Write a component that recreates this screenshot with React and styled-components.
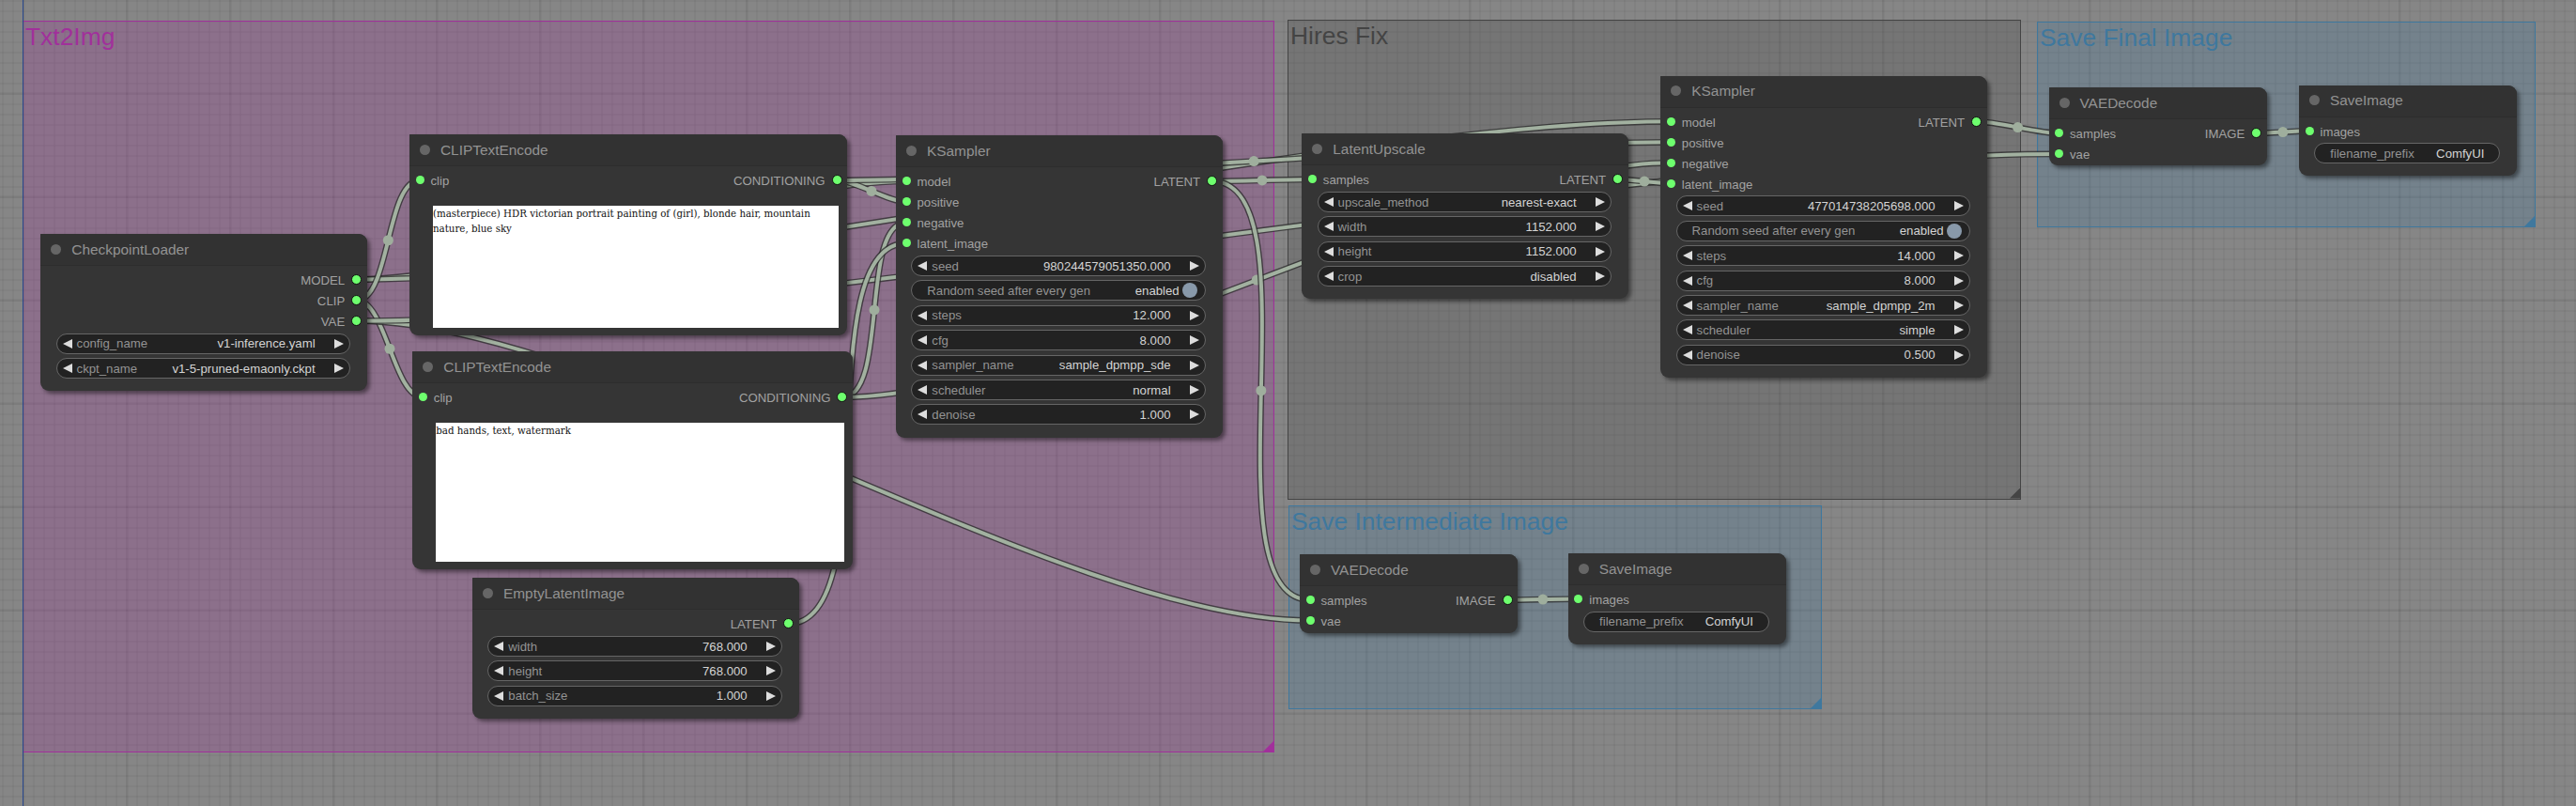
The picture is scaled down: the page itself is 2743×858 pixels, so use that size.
import styled, { createGlobalStyle } from "styled-components";

const GlobalStyle = createGlobalStyle`
  html, body {
    margin: 0;
    padding: 0;
    background: #868686;
    overflow: hidden;
  }
`;

const Canvas = styled.div`
  position: relative;
  width: 2743px;
  height: 858px;
  overflow: hidden;
  font-family: "Liberation Sans", Arial, sans-serif;
  background-color: #868686;
  background-image:
    linear-gradient(to right, rgba(0, 0, 0, 0.04) 3px, transparent 3px),
    linear-gradient(to bottom, rgba(0, 0, 0, 0.04) 3px, transparent 3px),
    linear-gradient(to right, rgba(0, 0, 0, 0.04) 2px, transparent 2px),
    linear-gradient(to bottom, rgba(0, 0, 0, 0.04) 2px, transparent 2px);
  background-size: 110px 110px, 110px 110px, 11px 11px, 11px 11px;
  background-position: 24px 0, 0 98px, 2px 0, 0 0;
`;

const AxisLine = styled.div`
  position: absolute;
  left: 24px;
  top: 0;
  width: 1px;
  height: 100%;
  background: #27478c;
`;

const Group = styled.section`
  position: absolute;
  box-sizing: border-box;
  left: ${(p) => p.$x}px;
  top: ${(p) => p.$y}px;
  width: ${(p) => p.$w}px;
  height: ${(p) => p.$h}px;
  padding: 3px 0 0 2px;
  border: 1px solid ${(p) => p.$color};
  background: ${(p) => p.$color}40;
  color: ${(p) => p.$color};
  font-size: 26.4px;
  line-height: 26px;

  &::after {
    content: "";
    position: absolute;
    right: 0;
    bottom: 0;
    width: 11px;
    height: 11px;
    background: ${(p) => p.$color};
    clip-path: polygon(100% 0, 100% 100%, 0 100%);
  }
`;

const WireLayer = styled.svg`
  position: absolute;
  left: 0;
  top: 0;
  width: 2743px;
  height: 858px;
`;

const NodeBox = styled.article`
  position: absolute;
  box-sizing: border-box;
  display: flex;
  flex-direction: column;
  left: ${(p) => p.$x}px;
  top: ${(p) => p.$y}px;
  width: ${(p) => p.$w}px;
  height: ${(p) => p.$h}px;
  background: #353535;
  border-radius: 1px 9px 9px 9px;
  box-shadow: 3px 3px 4px rgba(0, 0, 0, 0.45);
`;

const TitleBar = styled.header`
  box-sizing: border-box;
  flex: none;
  display: flex;
  align-items: center;
  gap: 11px;
  height: 34px;
  padding: 0 0 0 11px;
  background: #323232;
  border-bottom: 1px solid #2d2d2d;
  border-radius: 1px 9px 0 0;
  color: #929292;
  font-size: 15.4px;
`;

const TitleDot = styled.span`
  width: 11px;
  height: 11px;
  margin-bottom: 1px;
  border-radius: 50%;
  background: #666;
`;

const Slots = styled.div`
  flex: none;
  display: flex;
  flex-direction: column;
  padding-top: 3.6px;
`;

const SlotRow = styled.div`
  display: flex;
  justify-content: space-between;
  height: 22px;
  font-size: 13.2px;
  color: #a2a2a2;
`;

const Slot = styled.div`
  display: flex;
  align-items: center;
  gap: 7px;
  padding: 0 6.5px;
`;

const SlotLabel = styled.span`
  padding-top: 2px;
`;

const SlotDot = styled.span`
  box-sizing: border-box;
  flex: none;
  width: ${(p) => (p.$output ? 11 : 9)}px;
  height: ${(p) => (p.$output ? 11 : 9)}px;
  margin: ${(p) => (p.$output ? "-1px -1px -1px 0" : "0")};
  border-radius: 50%;
  background: #6eff6e;
  border: ${(p) => (p.$output ? "1px solid #111" : "none")};
`;

const Widgets = styled.div`
  flex: none;
  display: flex;
  flex-direction: column;
  gap: 4.4px;
  margin-top: 2.2px;
  padding: 0 17.6px 0 16.3px;
`;

const Widget = styled.div`
  box-sizing: border-box;
  display: flex;
  align-items: center;
  height: 22px;
  padding: ${(p) => (p.$plain ? "0 16px" : "0 6px")};
  justify-content: space-between;
  border: 1px solid #666;
  border-radius: 11px;
  background: #222;
  font-size: 13.2px;
  white-space: nowrap;
`;

const Arrow = styled.span`
  flex: none;
  width: 0;
  height: 0;
  border-top: 5.5px solid transparent;
  border-bottom: 5.5px solid transparent;
  border-left: ${(p) => (p.$right ? "10.5px solid #ddd" : "0")};
  border-right: ${(p) => (p.$right ? "0" : "10.5px solid #ddd")};
`;

const WidgetLabel = styled.span`
  color: #939393;
  margin-left: ${(p) => (p.$arrowed ? "5px" : "0")};
`;

const WidgetValue = styled.span`
  color: #d4d4d4;
  margin-left: auto;
  margin-right: ${(p) => (p.$arrowed ? "20.5px" : "0")};
`;

const ToggleKnob = styled.span`
  flex: none;
  width: 16px;
  height: 16px;
  margin: 0 -7.6px 0 3px;
  border-radius: 50%;
  background: #89a;
`;

const PromptBox = styled.div`
  box-sizing: border-box;
  flex: 1;
  margin: 16px 9px 7.7px 25px;
  background: #fff;
  color: #111;
  font-family: "DejaVu Serif Condensed", "DejaVu Serif", serif;
  font-size: 11.4px;
  line-height: 16px;
`;

const GROUPS = [
  { title: "Txt2Img", x: 24, y: 22, w: 1333, h: 779, color: "#a1309b" },
  { title: "Hires Fix", x: 1371, y: 20.5, w: 781, h: 511, color: "#444444" },
  { title: "Save Final Image", x: 2169, y: 23, w: 531, h: 219, color: "#3f789e" },
  { title: "Save Intermediate Image", x: 1372, y: 538, w: 568, h: 217, color: "#3f789e" },
];

const arrows = (label, value) => ({ kind: "arrows", label, value });

const NODES = {
  ckpt: {
    title: "CheckpointLoader", x: 43.3, y: 249, w: 347.4, h: 166.7,
    outputs: ["MODEL", "CLIP", "VAE"],
    widgets: [arrows("config_name", "v1-inference.yaml"), arrows("ckpt_name", "v1-5-pruned-emaonly.ckpt")],
  },
  clip1: {
    title: "CLIPTextEncode", x: 436, y: 143.3, w: 466, h: 213.4,
    inputs: ["clip"], outputs: ["CONDITIONING"],
    prompt: "(masterpiece) HDR victorian portrait painting of (girl), blonde hair, mountain nature, blue sky",
  },
  clip2: {
    title: "CLIPTextEncode", x: 439.3, y: 374.3, w: 468.7, h: 231.7,
    inputs: ["clip"], outputs: ["CONDITIONING"],
    prompt: "bad hands, text, watermark",
  },
  empty: {
    title: "EmptyLatentImage", x: 503, y: 615.3, w: 347.8, h: 149.7,
    outputs: ["LATENT"],
    widgets: [arrows("width", "768.000"), arrows("height", "768.000"), arrows("batch_size", "1.000")],
  },
  ks1: {
    title: "KSampler", x: 954, y: 144.3, w: 347.7, h: 321.4,
    inputs: ["model", "positive", "negative", "latent_image"], outputs: ["LATENT"],
    widgets: [
      arrows("seed", "980244579051350.000"),
      { kind: "toggle", label: "Random seed after every gen", value: "enabled" },
      arrows("steps", "12.000"),
      arrows("cfg", "8.000"),
      arrows("sampler_name", "sample_dpmpp_sde"),
      arrows("scheduler", "normal"),
      arrows("denoise", "1.000"),
    ],
  },
  upscale: {
    title: "LatentUpscale", x: 1386.3, y: 142.3, w: 347.4, h: 176,
    inputs: ["samples"], outputs: ["LATENT"],
    widgets: [
      arrows("upscale_method", "nearest-exact"),
      arrows("width", "1152.000"),
      arrows("height", "1152.000"),
      arrows("crop", "disabled"),
    ],
  },
  ks2: {
    title: "KSampler", x: 1768.3, y: 80.7, w: 347.4, h: 321,
    inputs: ["model", "positive", "negative", "latent_image"], outputs: ["LATENT"],
    widgets: [
      arrows("seed", "477014738205698.000"),
      { kind: "toggle", label: "Random seed after every gen", value: "enabled" },
      arrows("steps", "14.000"),
      arrows("cfg", "8.000"),
      arrows("sampler_name", "sample_dpmpp_2m"),
      arrows("scheduler", "simple"),
      arrows("denoise", "0.500"),
    ],
  },
  vaeFinal: {
    title: "VAEDecode", x: 2181.5, y: 93.3, w: 232.3, h: 82.7,
    inputs: ["samples", "vae"], outputs: ["IMAGE"],
  },
  saveFinal: {
    title: "SaveImage", x: 2448, y: 90.7, w: 232, h: 96.6,
    inputs: ["images"],
    widgets: [{ kind: "text", label: "filename_prefix", value: "ComfyUI" }],
  },
  vaeMid: {
    title: "VAEDecode", x: 1384, y: 590, w: 232, h: 84,
    inputs: ["samples", "vae"], outputs: ["IMAGE"],
  },
  saveMid: {
    title: "SaveImage", x: 1669.8, y: 589, w: 231.8, h: 97,
    inputs: ["images"],
    widgets: [{ kind: "text", label: "filename_prefix", value: "ComfyUI" }],
  },
};

// from node, output slot, to node, input slot
const LINKS = [
  ["ckpt", 0, "ks1", 0],
  ["ckpt", 0, "ks2", 0],
  ["ckpt", 1, "clip1", 0],
  ["ckpt", 1, "clip2", 0],
  ["ckpt", 2, "vaeMid", 1],
  ["ckpt", 2, "vaeFinal", 1],
  ["clip1", 0, "ks1", 1],
  ["clip1", 0, "ks2", 1],
  ["clip2", 0, "ks1", 2],
  ["clip2", 0, "ks2", 2],
  ["empty", 0, "ks1", 3],
  ["ks1", 0, "upscale", 0],
  ["ks1", 0, "vaeMid", 0],
  ["upscale", 0, "ks2", 3],
  ["ks2", 0, "vaeFinal", 0],
  ["vaeFinal", 0, "saveFinal", 0],
  ["vaeMid", 0, "saveMid", 0],
];

const slotY = (node, i) => node.y + 48.6 + i * 22;

// same spline the graph editor uses: handles are a quarter of the distance
const linkGeometry = ([a, out, b, inp]) => {
  const from = NODES[a];
  const to = NODES[b];
  const x1 = from.x + from.w - 11;
  const y1 = slotY(from, out);
  const x2 = to.x + 11;
  const y2 = slotY(to, inp);
  const d = Math.hypot(x2 - x1, y2 - y1) * 0.25;
  return {
    path: `M${x1} ${y1} C${x1 + d} ${y1} ${x2 - d} ${y2} ${x2} ${y2}`,
    mx: (x1 + x2) / 2,
    my: (y1 + y2) / 2,
  };
};

const Wires = () => (
  <WireLayer viewBox="0 0 2743 858" aria-hidden="true">
    {LINKS.map((link) => {
      const { path, mx, my } = linkGeometry(link);
      return (
        <g key={link.join("-")} fill="none">
          <path d={path} stroke="#2b2b2b" strokeOpacity="0.75" strokeWidth="6.8" />
          <path d={path} stroke="#a2b1a0" strokeWidth="4" />
          <circle cx={mx} cy={my} r="5.5" fill="#9fae9d" />
        </g>
      );
    })}
  </WireLayer>
);

const WidgetRow = ({ kind, label, value }) => {
  if (kind === "arrows") {
    return (
      <Widget>
        <Arrow />
        <WidgetLabel $arrowed>{label}</WidgetLabel>
        <WidgetValue $arrowed>{value}</WidgetValue>
        <Arrow $right />
      </Widget>
    );
  }
  return (
    <Widget $plain>
      <WidgetLabel>{label}</WidgetLabel>
      <WidgetValue>{value}</WidgetValue>
      {kind === "toggle" && <ToggleKnob />}
    </Widget>
  );
};

const Node = ({ title, x, y, w, h, inputs = [], outputs = [], widgets, prompt }) => {
  const rows = Array.from({ length: Math.max(inputs.length, outputs.length) }, (_, i) => i);
  return (
    <NodeBox $x={x} $y={y} $w={w} $h={h}>
      <TitleBar>
        <TitleDot />
        {title}
      </TitleBar>
      <Slots>
        {rows.map((i) => (
          <SlotRow key={i}>
            <Slot>
              {inputs[i] && <SlotDot />}
              {inputs[i] && <SlotLabel>{inputs[i]}</SlotLabel>}
            </Slot>
            <Slot>
              {outputs[i] && <SlotLabel>{outputs[i]}</SlotLabel>}
              {outputs[i] && <SlotDot $output />}
            </Slot>
          </SlotRow>
        ))}
      </Slots>
      {widgets && (
        <Widgets>
          {widgets.map((widget) => (
            <WidgetRow key={widget.label} {...widget} />
          ))}
        </Widgets>
      )}
      {prompt && <PromptBox>{prompt}</PromptBox>}
    </NodeBox>
  );
};

export default function App() {
  return (
    <Canvas>
      <GlobalStyle />
      {GROUPS.map((group) => (
        <Group key={group.title} $x={group.x} $y={group.y} $w={group.w} $h={group.h} $color={group.color}>
          {group.title}
        </Group>
      ))}
      <AxisLine />
      <Wires />
      {Object.entries(NODES).map(([id, node]) => (
        <Node key={id} {...node} />
      ))}
    </Canvas>
  );
}
